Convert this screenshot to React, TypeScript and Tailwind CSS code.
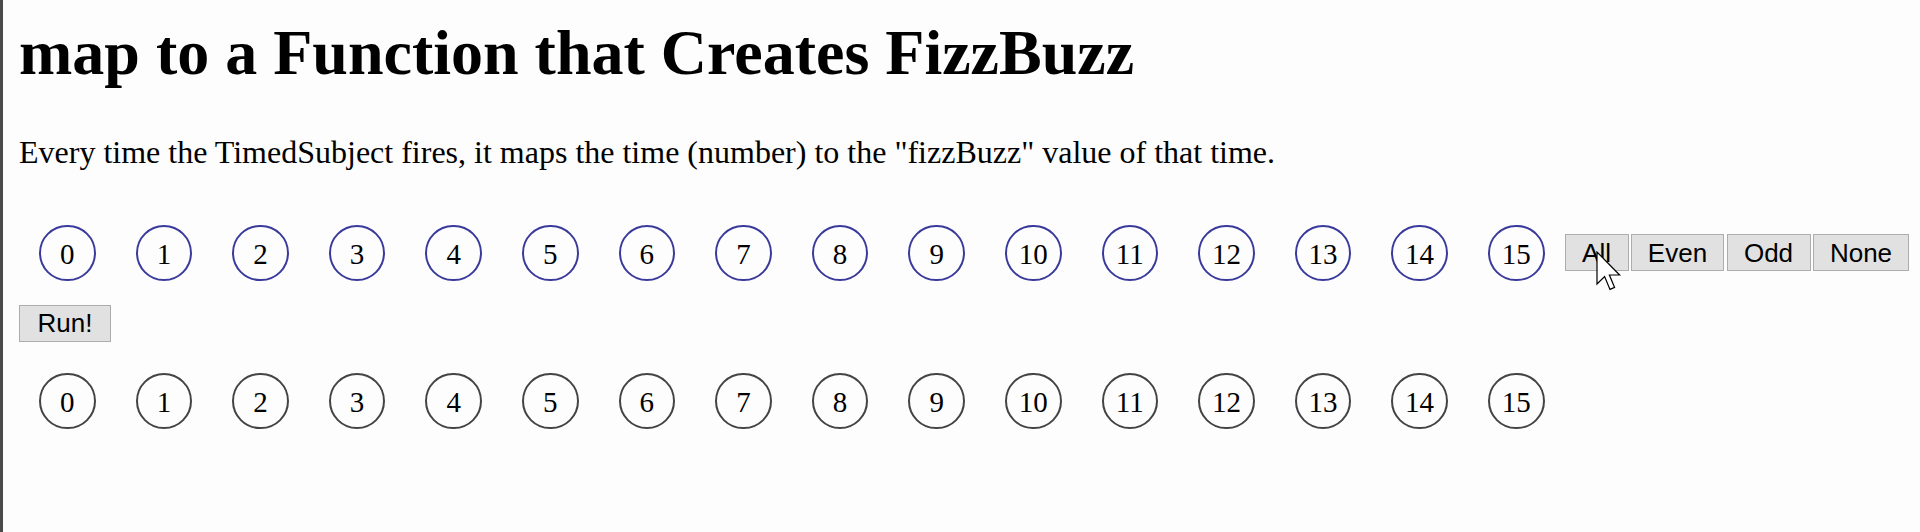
const numbers = Array.from({ length: 16 }, (_, i) => i)

const filters = [
  { label: "All", width: "w-[64px]" },
  { label: "Even", width: "w-[93px]" },
  { label: "Odd", width: "w-[84px]" },
  { label: "None", width: "w-[96px]" },
]

function Marble({ value, tone }: { value: number; tone: "blue" | "gray" }) {
  return (
    <div
      className={
        tone === "blue"
          ? "mx-5 flex h-[56px] w-[56.6px] shrink-0 items-center justify-center rounded-full border-2 border-[#3a3a9c] pt-[3px] text-[29px] leading-none"
          : "mx-5 flex h-[56px] w-[56.6px] shrink-0 items-center justify-center rounded-full border-2 border-[#444444] pt-[3px] text-[29px] leading-none"
      }
    >
      {value}
    </div>
  )
}

function GrayButton({ label, width }: { label: string; width: string }) {
  return (
    <button
      className={`${width} h-[37px] border border-[#adadad] bg-[#e1e1e1] font-['Liberation_Sans',Arial,sans-serif] text-[26px] leading-none text-black`}
    >
      {label}
    </button>
  )
}

function Cursor() {
  return (
    <svg
      className="pointer-events-none absolute left-[1593px] top-[251px]"
      width="26"
      height="42"
      viewBox="0 0 13 21"
    >
      <path
        d="M0.5 0.5 L0.5 16.5 L4.3 12.8 L7 19.2 L9.3 18.2 L6.7 12 L11.8 12 Z"
        fill="#ffffff"
        stroke="#000000"
        strokeWidth="0.6"
        strokeLinejoin="miter"
      />
    </svg>
  )
}

export default function App() {
  return (
    <div className="relative min-h-[532px] border-l-[3px] border-[#4a4a4a] bg-[#fdfdfd] pl-4 font-['Liberation_Serif','Times_New_Roman',serif] text-black">
      <h1 className="pt-[21px] text-[64px] font-bold leading-none">
        map to a Function that Creates FizzBuzz
      </h1>

      <p className="mt-[51px] text-[32px] leading-none">
        Every time the TimedSubject fires, it maps the time (number) to the
        "fizzBuzz" value of that time.
      </p>

      <div className="mt-[56.5px] flex items-center">
        {numbers.map((n) => (
          <Marble key={n} value={n} tone="blue" />
        ))}
        <div className="flex gap-[2.5px]">
          {filters.map((f) => (
            <GrayButton key={f.label} label={f.label} width={f.width} />
          ))}
        </div>
      </div>

      <div className="mt-[24px]">
        <GrayButton label="Run!" width="w-[92px]" />
      </div>

      <div className="mt-[31.5px] flex items-center">
        {numbers.map((n) => (
          <Marble key={n} value={n} tone="gray" />
        ))}
      </div>

      <Cursor />
    </div>
  )
}
